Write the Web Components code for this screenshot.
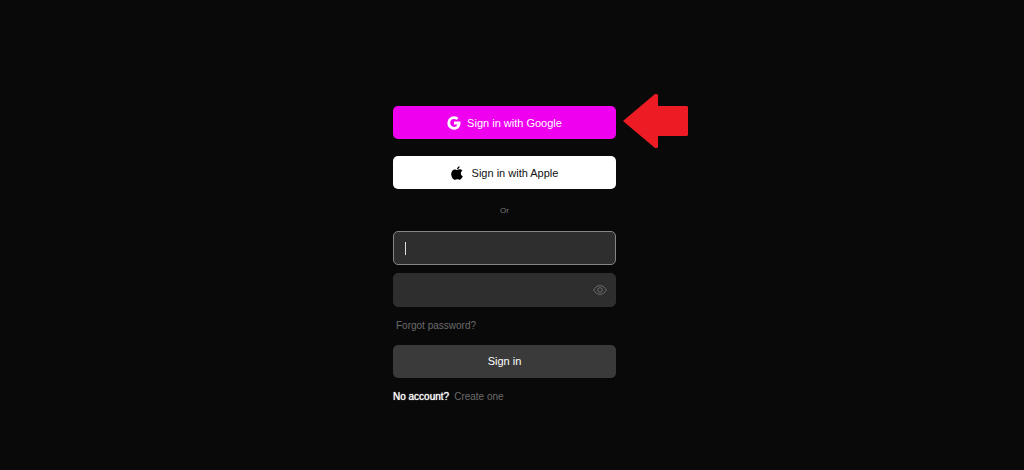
<!DOCTYPE html>
<html lang="en">
<head>
<meta charset="utf-8">
<meta name="viewport" content="width=device-width, initial-scale=1">
<title>Sign in</title>
<style>
    body {
        margin: 0;
        min-height: 100vh;
        background: #090909;
        color: #fff;
        font-family: "Liberation Sans", Arial, sans-serif;
        font-size: 10px;
    }
</style>
</head>
<body>
<sign-in-page></sign-in-page>

<template id="page-template">
    <style>
        :host {
            display: flex;
            justify-content: center;
            padding: 106px 15px 60px 0;
        }

        form {
            display: flex;
            flex-direction: column;
            width: 100%;
            max-width: 223px;
        }

        .providers {
            display: grid;
            gap: 17px;
        }

        .row {
            position: relative;
        }

        red-arrow {
            position: absolute;
            left: 100%;
            top: -12px;
            margin-left: 7px;
        }

        .or {
            margin: 16px 0 15px;
            color: #777;
            font-size: 8px;
            line-height: 11px;
            text-align: center;
        }

        .fields {
            display: grid;
            gap: 8px;
        }

        a {
            color: #6b6b6b;
            text-decoration: none;
            line-height: 12px;
        }

        .forgot {
            align-self: flex-start;
            margin: 13px 3px;
        }

        .account {
            display: flex;
            gap: 5px;
            margin: 13px 0 0;
            line-height: 12px;
        }

        .account span {
            text-shadow: 0 0 1px #fff;
        }
    </style>

    <form>
        <div class="providers">
            <div class="row">
                <action-button variant="google">
                    <svg slot="icon" width="14" height="14" viewBox="0 0 14 14" aria-hidden="true">
                        <path fill="#fff" d="M7 5.6h6.4c.1.4.1.9.1 1.4 0 4-2.6 6.8-6.500 6.800A6.700 6.800 0 0 1 .3 7 6.700 6.800 0 0 1 7 .2c1.800 0 3.300.700 4.500 1.800L9.500 4A3.500 3.500 0 0 0 7 3.100 3.900 3.900 0 0 0 3.200 7c0 2.200 1.700 3.900 3.900 3.900 1.800 0 2.900-1 3.200-2.400H7z"/>
                    </svg>
                    Sign in with Google
                </action-button>
                <red-arrow></red-arrow>
            </div>
            <action-button variant="apple">
                <svg slot="icon" width="12" height="14" viewBox="0 0 12 14" aria-hidden="true">
                    <path d="M8.6.2c.1 1.600-1.200 3-2.600 3C5.900 1.700 7.200.4 8.600.2zM11.400 4.800C10.300 5.500 9.900 6.300 9.900 7.400c0 1.300.7 2.200 1.900 2.700-.5 1.500-1.700 3.600-3 3.600-.8 0-1.300-.5-2.400-.5s-1.600.5-2.400.5C2.100 13.700.2 10.700.2 7.900c0-2.700 1.800-4.500 3.700-4.500 1 0 1.700.6 2.400.6.600 0 1.400-.7 2.600-.7 1 0 2 .6 2.500 1.500z"/>
                </svg>
                Sign in with Apple
            </action-button>
        </div>
        <p class="or">Or</p>
        <div class="fields">
            <text-field type="email" label="Email" active></text-field>
            <text-field type="password" label="Password"></text-field>
        </div>
        <a class="forgot" href="#">Forgot password?</a>
        <action-button variant="submit">Sign in</action-button>
        <p class="account"><span>No account?</span> <a href="#">Create one</a></p>
    </form>
</template>

<template id="button-template">
    <style>
        :host {
            display: block;
            --bg: #3a3a3a;
            --fg: #fff;
            --gap: 6px;
            --pad-bottom: 0;
        }

        :host([variant="google"]) {
            --bg: #ef00ef;
        }

        :host([variant="apple"]) {
            --bg: #fff;
            --fg: #111;
            --gap: 9px;
        }

        :host([variant="submit"]) {
            --pad-bottom: 2px;
        }

        button {
            display: flex;
            align-items: center;
            justify-content: center;
            gap: var(--gap);
            width: 100%;
            height: 33px;
            padding: 0 0 var(--pad-bottom);
            border: 0;
            border-radius: 5px;
            background: var(--bg);
            color: var(--fg);
            font: 11px/14px "Liberation Sans", Arial, sans-serif;
            cursor: pointer;
        }
    </style>
    <button type="button"><slot name="icon"></slot><span><slot></slot></span></button>
</template>

<template id="field-template">
    <style>
        :host {
            display: block;
        }

        .box {
            position: relative;
            display: flex;
            align-items: center;
            height: 34px;
            box-sizing: border-box;
            padding: 0 8px 0 11px;
            border: 1px solid #2e2e2e;
            border-radius: 5px;
            background: #2e2e2e;
        }

        :host([active]) .box {
            border-color: #858585;
        }

        input {
            flex: 1;
            min-width: 0;
            height: 20px;
            padding: 0;
            border: 0;
            outline: 0;
            background: none;
            color: #fff;
            font: 11px/14px "Liberation Sans", Arial, sans-serif;
        }

        .caret {
            display: none;
            width: 1px;
            height: 13px;
            background: #ddd;
        }

        :host([active]) .caret {
            display: block;
        }

        .eye {
            display: none;
            padding: 0;
            border: 0;
            background: none;
            cursor: pointer;
        }

        :host([type="password"]) .eye {
            display: flex;
        }
    </style>
    <div class="box">
        <span class="caret"></span>
        <input>
        <button class="eye" type="button" aria-label="Show password">
            <svg width="14" height="10" viewBox="0 0 14 10" fill="none" stroke="#6c6c6c">
                <path d="M.7 5C2 2.200 4.400.6 7 .6S12 2.200 13.300 5C12 7.800 9.600 9.400 7 9.400S2 7.800.7 5z"/>
                <circle cx="7" cy="5" r="2.300"/>
            </svg>
        </button>
    </div>
</template>

<template id="arrow-template">
    <style>
        :host {
            display: block;
        }

        svg {
            display: block;
        }
    </style>
    <svg width="65" height="54" viewBox="0 0 65 54" aria-hidden="true">
        <path fill="#ed1c24" d="M0 27 32 0H34L35 1V12H64L65 13V41L64 42H35V53L34 54H32z"/>
    </svg>
</template>

<script>
    class BaseElement extends HTMLElement {
        constructor(templateId) {
            super();
            const template = document.getElementById(templateId);
            this.attachShadow({ mode: "open" });
            this.shadowRoot.appendChild(template.content.cloneNode(true));
        }
    }

    class ActionButton extends BaseElement {
        constructor() {
            super("button-template");
        }
    }

    class TextField extends BaseElement {
        constructor() {
            super("field-template");
            this.input = this.shadowRoot.querySelector("input");
        }

        static get observedAttributes() {
            return ["type", "label"];
        }

        attributeChangedCallback() {
            this.input.type = this.getAttribute("type") ?? "text";
            this.input.setAttribute("aria-label", this.getAttribute("label") ?? "");
        }
    }

    class RedArrow extends BaseElement {
        constructor() {
            super("arrow-template");
        }
    }

    class SignInPage extends BaseElement {
        constructor() {
            super("page-template");
        }
    }

    customElements.define("action-button", ActionButton);
    customElements.define("text-field", TextField);
    customElements.define("red-arrow", RedArrow);
    customElements.define("sign-in-page", SignInPage);
</script>
</body>
</html>
